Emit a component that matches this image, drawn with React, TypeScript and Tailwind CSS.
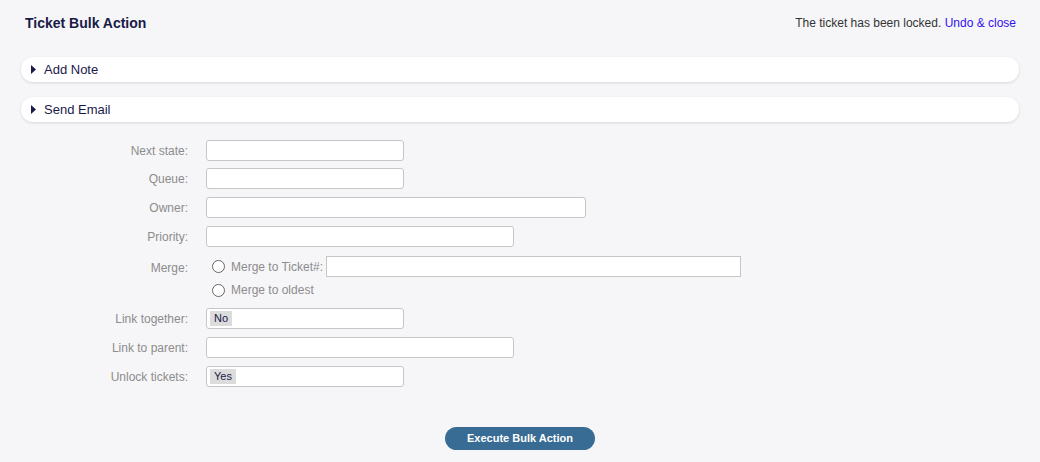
import React from 'react';

function Accordion({ title }: { title: string }) {
  return (
    <div className="flex h-[25px] items-center rounded-[12px] bg-white pl-[10px] shadow-[0_1px_3px_rgba(0,0,0,0.12)]">
      <svg width="5" height="9" viewBox="0 0 5 9" className="mr-[8px]">
        <path d="M0 0 L5 4.5 L0 9 Z" fill="#1a1a4a" />
      </svg>
      <span className="text-[13px] text-[#1a1a4a]">{title}</span>
    </div>
  );
}

function Row({ label, children, className = '' }: { label: string; children: React.ReactNode; className?: string }) {
  return (
    <div className={`flex items-center ${className}`}>
      <div className="w-[168px] pr-[1px] text-right text-[12px] text-[#8c8c8c]">{label}</div>
      <div className="ml-[17px] flex items-center">{children}</div>
    </div>
  );
}

function Field({ width, tag }: { width: string; tag?: string }) {
  return (
    <div className={`flex h-[21px] items-center rounded-[3px] border border-[#c6c6c6] bg-white px-[3px] ${width}`}>
      {tag && <span className="bg-[#dcdcdc] px-[4px] text-[11px] leading-[15px] text-[#1a1a4a]">{tag}</span>}
    </div>
  );
}

function Radio({ label }: { label: string }) {
  return (
    <div className="flex items-center">
      <span className="ml-[6px] mr-[6px] block h-[13px] w-[13px] rounded-full border border-[#666] bg-white" />
      <span className="text-[12px] text-[#8c8c8c]">{label}</span>
    </div>
  );
}

export default function App() {
  return (
    <div
      className="h-[462px] w-full overflow-hidden bg-[#f6f6f8] px-[21px]"
      style={{ fontFamily: '"Liberation Sans", Arial, sans-serif' }}
    >
      <div className="flex h-[44px] items-center justify-between pl-[4px] pr-[3px] pt-[2px]">
        <h1 className="text-[14px] font-bold text-[#1a1a4a]">Ticket Bulk Action</h1>
        <div className="text-[12px] text-[#333]">
          The ticket has been locked. <a className="text-[#3311ee]">Undo &amp; close</a>
        </div>
      </div>

      <div className="mt-[13px] flex flex-col gap-[15px]">
        <Accordion title="Add Note" />
        <Accordion title="Send Email" />
      </div>

      <div className="mt-[18px] flex flex-col">
        <Row label="Next state:">
          <Field width="w-[198px]" />
        </Row>
        <Row label="Queue:" className="mt-[7px]">
          <Field width="w-[198px]" />
        </Row>
        <Row label="Owner:" className="mt-[8px]">
          <Field width="w-[380px]" />
        </Row>
        <Row label="Priority:" className="mt-[8px]">
          <Field width="w-[308px]" />
        </Row>
        <div className="mt-[9px] flex">
          <div className="w-[168px] pr-[1px] pt-[3px] text-right text-[12px] text-[#8c8c8c]">Merge:</div>
          <div className="ml-[17px] flex flex-col">
            <div className="flex items-center">
              <Radio label="Merge to Ticket#:" />
              <div className="ml-[3px] h-[21px] w-[415px] border border-[#c6c6c6] bg-white" />
            </div>
            <div className="mt-[4px] flex h-[18px] items-center">
              <Radio label="Merge to oldest" />
            </div>
          </div>
        </div>
        <Row label="Link together:" className="mt-[9px]">
          <Field width="w-[198px]" tag="No" />
        </Row>
        <Row label="Link to parent:" className="mt-[8px]">
          <Field width="w-[308px]" />
        </Row>
        <Row label="Unlock tickets:" className="mt-[8px]">
          <Field width="w-[198px]" tag="Yes" />
        </Row>
      </div>

      <div className="mt-[40px] flex justify-center">
        <button className="h-[23px] w-[150px] rounded-full bg-[#386c94] text-[11px] font-bold text-white">
          Execute Bulk Action
        </button>
      </div>
    </div>
  );
}
